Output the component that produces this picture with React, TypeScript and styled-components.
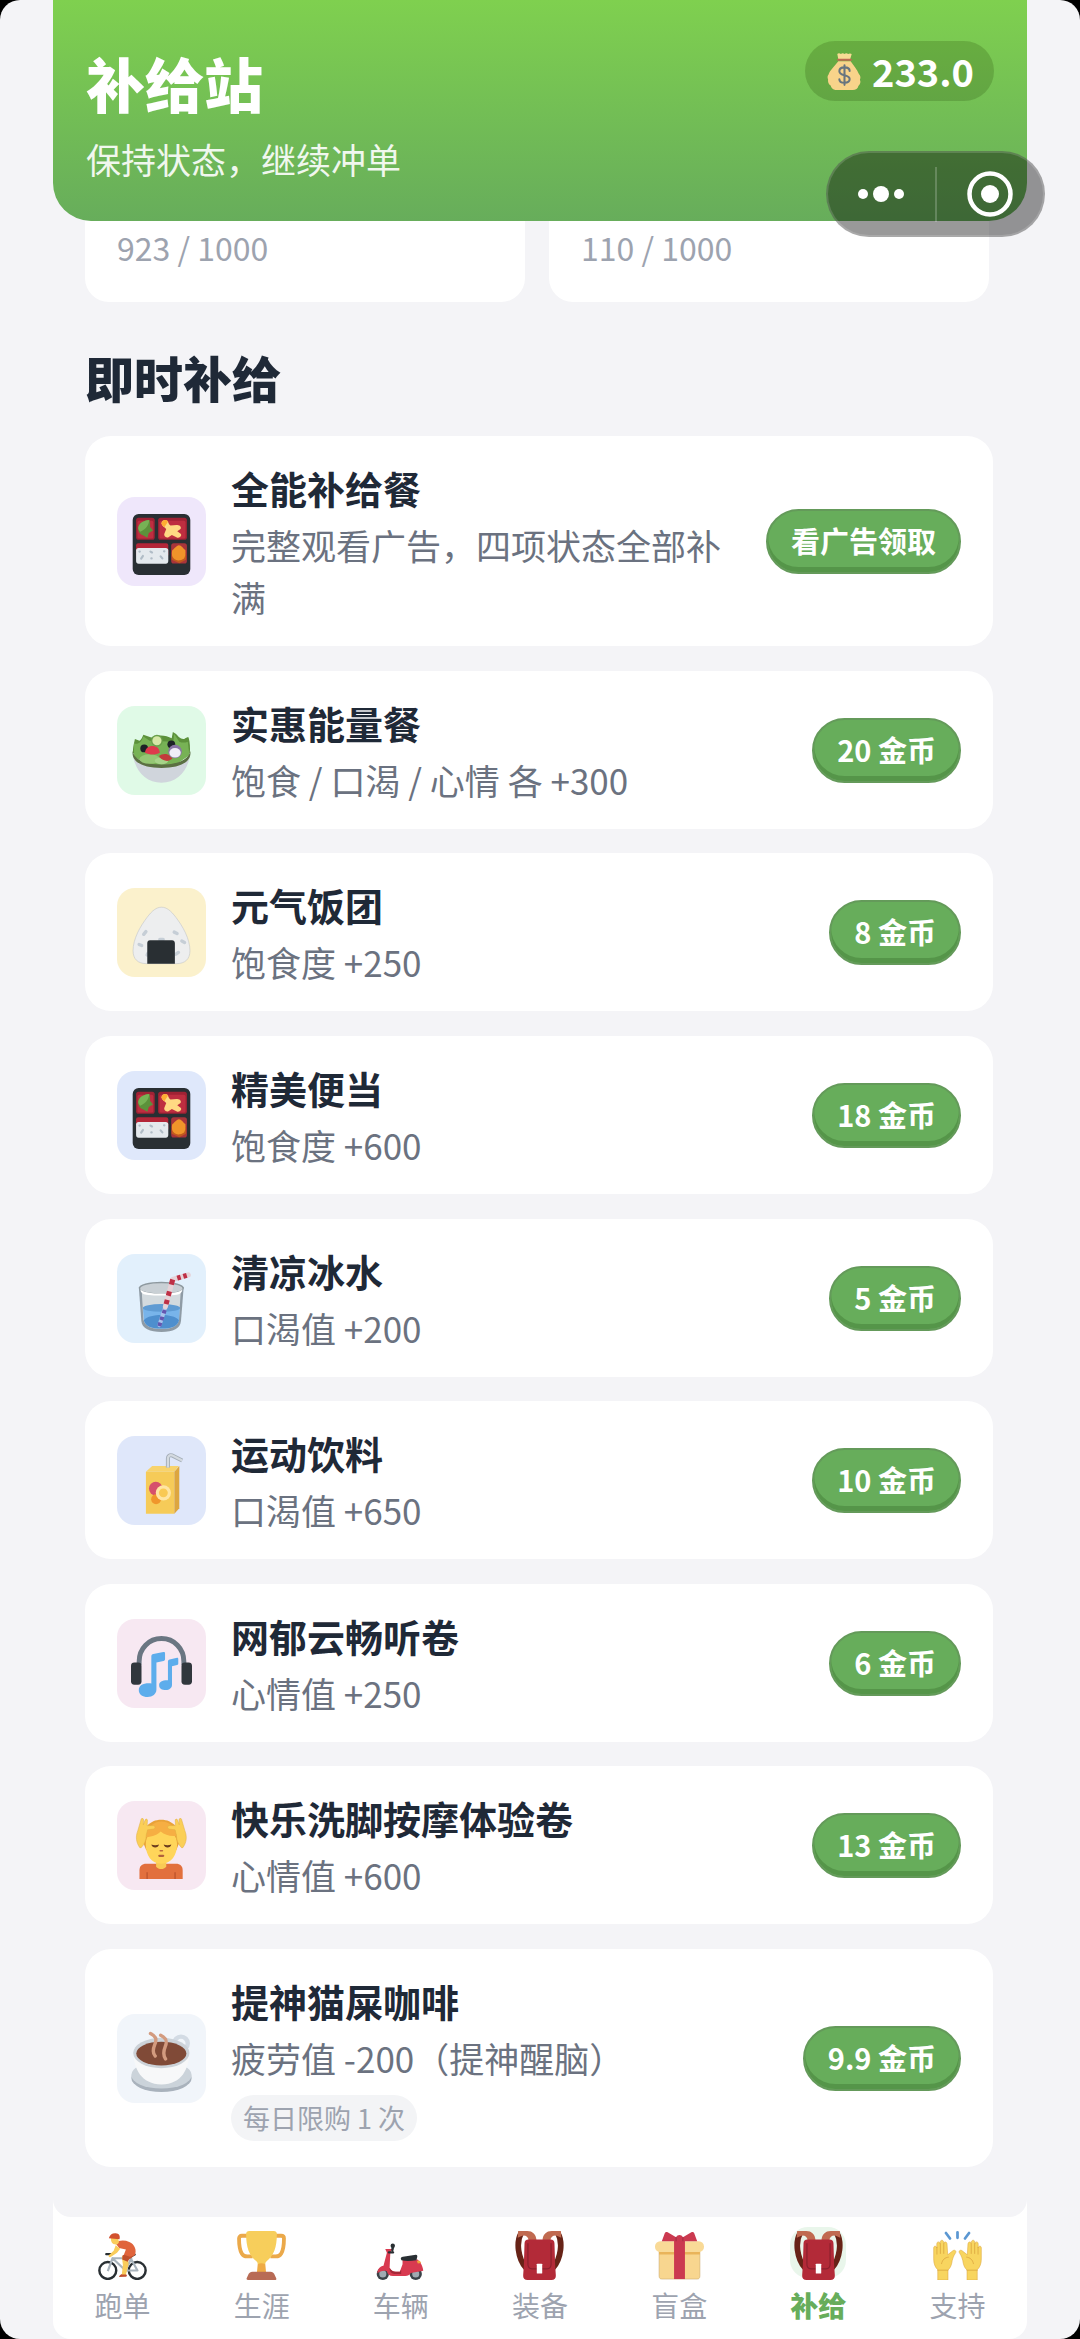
import React from 'react';

import styled, { createGlobalStyle } from 'styled-components';

const GlobalStyle = createGlobalStyle`
	* {
		box-sizing: border-box;
	}

	body {
		margin: 0;
		background: #000000;
		font-family: 'Noto Sans CJK SC', 'Noto Sans', sans-serif;
	}
`;

const Page = styled.div`
	position: relative;
	display: flex;
	min-height: 100vh;
	padding: 0 53px;
	background: #f4f4f7;
	border-radius: 20px;
	overflow: hidden;
`;

const Panel = styled.div`
	flex: 1;
	min-width: 0;
	display: flex;
	flex-direction: column;
	background: #ffffff;
	border-radius: 0 0 18px 18px;
`;

const Screen = styled.div`
	flex: 1;
	display: flex;
	flex-direction: column;
	background: #f4f4f7;
	border-radius: 0 0 18px 18px;
`;

const Header = styled.header`
	display: flex;
	justify-content: space-between;
	align-items: flex-start;
	padding: 41px 33px 37px;
	background: linear-gradient(#7fd04f, #67ad5b);
	border-radius: 0 0 38px 38px;
	color: #ffffff;
`;

const Title = styled.h1`
	margin: 0 0 9px;
	font-size: 59px;
	font-weight: 900;
	line-height: 84px;
`;

const Subtitle = styled.p`
	margin: 0;
	font-size: 35px;
	line-height: 50px;
	opacity: 0.9;
`;

const CoinPill = styled.div`
	display: flex;
	align-items: center;
	gap: 9px;
	height: 60px;
	padding: 0 20px 0 21px;
	border-radius: 30px;
	background: rgba(30, 60, 0, 0.2);
	font-size: 38px;
	font-weight: 700;
	line-height: 60px;
`;

const Capsule = styled.div`
	position: absolute;
	top: 151px;
	right: 35px;
	display: flex;
	align-items: center;
	width: 219px;
	height: 86px;
	border: 2px solid rgba(255, 255, 255, 0.15);
	border-radius: 43px;
	background: rgba(0, 0, 0, 0.4);
`;

const CapsuleButton = styled.button`
	flex: 1;
	display: flex;
	align-items: center;
	justify-content: center;
	height: 100%;
	padding: 0;
	border: 0;
	background: none;
`;

const CapsuleDivider = styled.span`
	width: 2px;
	height: 55px;
	background: rgba(255, 255, 255, 0.2);
`;

const Main = styled.main`
	flex: 1;
	display: flex;
	flex-direction: column;
	padding: 0 34px 50px 32px;
`;

const StatRow = styled.div`
	display: flex;
	gap: 24px;
`;

const StatCard = styled.div`
	flex: 0 0 calc(50% - 14px);
	padding: 0 32px 29px;
	border-radius: 0 0 24px 24px;
	background: #ffffff;
	color: #9da3af;
	font-size: 32px;
	line-height: 52px;
`;

const SectionTitle = styled.h2`
	margin: 40px 0 24px;
	color: #1f2937;
	font-size: 49px;
	font-weight: 900;
	line-height: 70px;
`;

const List = styled.ul`
	flex: 1;
	display: flex;
	flex-direction: column;
	justify-content: space-between;
	margin: 0;
	padding: 0;
	list-style: none;
`;

const Card = styled.li`
	display: flex;
	align-items: center;
	gap: 25px;
	padding: 24px 32px 23px;
	border-radius: 26px;
	background: #ffffff;
`;

const IconTile = styled.div<{ $tint: string }>`
	flex: none;
	display: flex;
	justify-content: center;
	width: 89px;
	height: 89px;
	padding-top: 17px;
	border-radius: 18px;
	background: ${(props) => props.$tint};
`;

const CardBody = styled.div`
	flex: 1;
	min-width: 0;
`;

const CardTitle = styled.h3`
	margin: 0 0 3px;
	color: #1f2937;
	font-size: 38px;
	font-weight: 700;
	line-height: 56px;
`;

const CardText = styled.p`
	margin: 0;
	color: #6b7280;
	font-size: 35px;
	line-height: 52px;
`;

const Limit = styled.span`
	display: block;
	width: fit-content;
	margin: 11px 0 3px;
	padding: 0 12px;
	border-radius: 23px;
	background: #f3f4f6;
	color: #9da3af;
	font-size: 27px;
	line-height: 46px;
`;

const BuyButton = styled.button`
	flex: none;
	height: 65px;
	padding: 0 23px 3px;
	border: 2px solid #649a5a;
	border-radius: 33px;
	background: #67ad5b;
	box-shadow: inset 0 -5px 0 #559549;
	color: #ffffff;
	font-family: inherit;
	font-size: 29px;
	font-weight: 700;
	line-height: 50px;
	white-space: nowrap;
`;

const Nav = styled.nav`
	display: grid;
	grid-template-columns: repeat(7, 1fr);
	padding: 10px 0 14px;
`;

const NavLink = styled.a<{ $active?: boolean }>`
	display: flex;
	flex-direction: column;
	align-items: center;
	gap: 7px;
	color: ${(props) => (props.$active ? '#67ad5b' : '#9da3af')};
	font-size: 28px;
	font-weight: ${(props) => (props.$active ? 900 : 400)};
	line-height: 40px;
	text-decoration: none;
`;

const NavIcon = styled.span<{ $active?: boolean }>`
	display: flex;
	justify-content: center;
	width: 56px;
	height: 51px;
	padding-top: 4px;
	border-radius: 18px;
	background: ${(props) => (props.$active ? '#e9f6eb' : 'transparent')};
`;

const Svg = styled.svg<{ $size: number }>`
	flex: none;
	display: block;
	width: ${(props) => props.$size}px;
	height: ${(props) => props.$size}px;
`;

const MoneyBag = () => (
	<Svg $size={37} viewBox="0 0 36 36" aria-hidden="true">
		<path
			fill="#f8d38a"
			d="M12 8C9 12 3.500 17 2.500 21c-1 1-1.300 3-.5 4.500-.3 3 .5 5 2.500 6C5.500 35 8 36 11 36h15c3 0 5-1.500 5.500-4 2-1.500 2.500-4 1.500-6 1-2 .5-4-1-5.500C30.500 16 26.500 12 24 8z"
		/>
		<path fill="#f8dc94" d="M11 1c1-1 2.500-.8 3.500 0 1-1 2.500-1 3.500 0 1-1 2.500-1 3.500 0 1-.8 2.700-.8 3.500 0l-1.500 5H12z" />
		<path fill="#bf6952" d="M11.500 5.500h13c.9 0 .9 2 0 2h-13c-.9 0-.9-2 0-2z" />
		<path
			fill="none"
			stroke="#67757f"
			strokeWidth="2"
			strokeLinecap="round"
			d="M23 17.500c0-2.300-2-3.500-5-3.500s-5 1.200-5 3.700c0 5 10 3 10 7.600 0 2.500-2 3.700-5 3.700s-5-1.200-5-3.500M18 12v19"
		/>
	</Svg>
);

const Bento = () => (
	<Svg $size={61} viewBox="0 0 36 36" aria-hidden="true">
		<rect x="1" width="34" height="36" rx="3.500" fill="#292f33" />
		<rect x="3" y="2.200" width="11" height="13" rx="1.500" fill="#a02234" />
		<rect x="3.800" y="4" width="9.400" height="10.500" rx="1" fill="#be2e40" />
		<rect x="16" y="2.200" width="17" height="13" rx="1.500" fill="#a02234" />
		<rect x="16.800" y="4" width="15.400" height="10.500" rx="1" fill="#be2e40" />
		<path fill="#5c913b" d="M4.300 8c.5-3 3-4 6.500-4.500.5 1.500.6 2.500.4 4l1.800 2.200-2.500 1.500-.8 2.800-2.700-1.500C5 12 4 10 4.300 8z" />
		<path fill="#77b255" d="M4.300 8c.5-3 3-4 6.500-4.500-.4 3-1.500 5-5.300 7C4.600 9.700 4.200 9 4.300 8z" />
		<path
			fill="#ffd983"
			d="M18 5.500c.3-2 2.800-2.600 3.800-1 .6 1 .6 1.700 1.500 2.300l3.700-.3c2-.2 3.300 1.800 1.800 2.700l-1.500 1 2 1.500c1 1-.5 2.800-2.200 2.200l-3-1.500-2 1.300c-1.700.6-3-1-2.300-2.300l1-2.500c-.8-1-2.500-1.500-2.800-3.400z"
		/>
		<path fill="#ffac33" d="M18 5.500c.3-2 2.800-2.600 3.800-1l-2 3.200c-1-.4-1.700-1-1.800-2.200z" />
		<rect x="3" y="17.200" width="19" height="8" rx="1.200" fill="#b32638" />
		<rect x="3" y="20" width="19" height="9.300" rx="1.500" fill="#e4e9ed" />
		<path
			stroke="#b0bcc6"
			strokeWidth="1.300"
			strokeLinecap="round"
			d="M6 26.300l1-1.500M11.500 22.200l.9.500M17.500 25l1 1.200M12 26.200h.2M19.500 22h.2M5 22.200h.2"
		/>
		<rect x="23.700" y="17.200" width="9.300" height="12" rx="1.500" fill="#a9343a" />
		<path fill="#c1591f" d="M24 24l4.500-3.500 4 3.500v3l-4 2-4.500-2z" />
		<path fill="#f0942a" d="M24.300 21.500c1-.5 2.500-3 4-3s2.500 2 3.800 2.800c.3 2.200-.2 4.200-.8 4.900-1 .6-2.500 1.300-3.500 1.200-1.500-.3-2.800-1-3.300-2.200-.5-1-.5-2.500-.2-3.700z" />
	</Svg>
);

const Salad = () => (
	<Svg $size={61} viewBox="0 0 36 36" aria-hidden="true">
		<path
			fill="#5c913b"
			d="M1.200 18C1 14 2 11.500 2.300 9.500l2.700 1c.8-.2 1.800-2.200 2.300-3.500L12 8.500C17 6.500 21 7.500 24 9l.7-3.700c1.300.7 2.600 1.600 3.500 3 1.300.9 2.200 1.400 3.500 1 .9-.6 1.600-1 2.300-.8.8 3 1 6 .7 9.500z"
		/>
		<path
			fill="#77b255"
			d="M1.800 12c2.200 1 4.200-.5 5.500-4l3.700 2.500 14 .5.500-4.500 3 4.500c1.700.8 3.700.6 5 0L34.500 19l-8 5.500-15 .5L1.800 20z"
		/>
		<path fill="#d0d5dc" d="M1 17.500C2 28 8.500 35.200 18 35.200S34 28 35 17.500c-2 5-9 8-17 8s-15-3-17-8z" />
		<path fill="#5b7042" d="M1 16.500c1 5.500 8 8 17 8s16-2.500 17-8c1 6.500-6 10-17 10S0 23 1 16.500z" />
		<ellipse cx="11" cy="21.300" rx="6" ry="2.800" fill="#95c774" />
		<ellipse cx="18" cy="22.300" rx="4" ry="2" fill="#a6d388" />
		<circle cx="7.800" cy="15" r="2.300" fill="#1d2226" />
		<circle cx="23.800" cy="12.600" r="2.300" fill="#1d2226" />
		<path fill="#dd3a4c" d="M8.300 17.500c0-2.500 2-4 4.500-4s4 1.600 4.200 4c-2.500 1.400-6 1.400-8.700 0z" />
		<path fill="#c23b3b" d="M16.500 19.500c1.500-1.400 4.500-1.600 6-.5l2 2c-1.600 1.400-3 1.600-4.500 1.200-1.700-.5-3-1.500-3.500-2.700z" />
		<circle cx="26" cy="16.800" r="4" fill="#8a76a5" />
		<ellipse cx="26" cy="17.600" rx="3.400" ry="2.800" fill="#f1eef8" />
		<circle cx="15.300" cy="10.500" r="3.500" fill="#6a9f4b" />
		<circle cx="15.300" cy="10.500" r="2.700" fill="#d5e8a6" />
	</Svg>
);

const RiceBall = () => (
	<Svg $size={61} viewBox="0 0 36 36" aria-hidden="true">
		<path
			fill="#edeeef"
			stroke="#b9bec3"
			strokeWidth="0.300"
			d="M18 1.300c-3 0-5.500 2-8.500 6C5.500 12.500 1.200 20 1.200 27c0 5 3 7.600 7.800 7.600h18c4.800 0 7.800-2.600 7.800-7.600 0-7-4.300-14.500-8.300-19.700-3-4-5.500-6-8.500-6z"
		/>
		<path
			stroke="#c6ced6"
			strokeWidth="2"
			strokeLinecap="round"
			d="M7.500 17.300l1.300-1.600M4.800 23.300l1.500.6M25.500 16l1.700.8M30 21.300l1.600.8M26.500 29l1.500-1M17 20.300h2M9.500 29.500l.5-1"
		/>
		<path fill="#292f33" d="M11.200 20.800h13c1 0 1.700.7 1.700 1.700v12.200H9.600V22.500c0-1 .6-1.700 1.600-1.700z" />
	</Svg>
);

const Cup = () => (
	<Svg $size={61} viewBox="0 0 36 36" aria-hidden="true">
		<path fill="#8f9ba5" d="M4.600 9.500l1.500 20C6.500 34 11 36 18 36s11-2 11.500-6.500l1.600-20z" />
		<path fill="#d3dade" d="M6.300 11l1 17.500C8 32.500 12 34.300 18 34.300s9.700-1.800 10.300-5.800L29.400 11z" />
		<path fill="#78b4ea" d="M7 21.500l.6 7.500c.8 3.500 4.400 5 10.400 5s9.500-1.500 10.300-5l.6-7.500z" />
		<path fill="#4e8fce" d="M7.600 29c2-2.200 6-3 10.400-3s8.300.8 10.300 3c-.8 3.500-4.300 5-10.300 5s-9.600-1.500-10.400-5z" />
		<ellipse cx="18" cy="21.800" rx="11" ry="2.300" fill="#5f9bd3" />
		<path stroke="#a9c3ec" strokeWidth="2.400" strokeLinecap="round" d="M20 22l-3.200 10" />
		<path stroke="#6456b0" strokeWidth="2.400" d="M19.900 23l-.6 2M18.500 27l-.6 2M17.300 30.500l-.6 2" />
		<ellipse cx="17.900" cy="10" rx="13.300" ry="3.700" fill="#8e999f" />
		<ellipse cx="17.900" cy="10.300" rx="12.400" ry="3" fill="#c9d0d5" />
		<path fill="#ffffff" d="M5.500 10.700c2 3.500 22.800 3.500 24.900 0-.3 2-1.400 3-3.400 3.300-6 .7-12 .7-18 0-2.200-.4-3.300-1.300-3.500-3.300z" />
		<path
			fill="none"
			stroke="#e6d3d8"
			strokeWidth="3"
			strokeLinecap="round"
			strokeLinejoin="round"
			d="M33.800 2.300L24.600 5l-4.300 16"
		/>
		<path
			stroke="#be3046"
			strokeWidth="3"
			d="M32.900 2.600l-2 .6M29.300 3.600l-2 .6M24.600 5l-.8 3M22.700 12l-.7 2.600M21.400 17l-.7 2.600"
		/>
	</Svg>
);

const JuiceBox = () => (
	<Svg $size={61} viewBox="0 0 36 36" aria-hidden="true">
		<path fill="#f8d36c" d="M8.800 11l3.700-3.400h15.700L25.500 11z" />
		<path fill="#f6cb58" d="M8.800 11h16.800v24.800H8.800z" />
		<path fill="#dda63f" d="M25.600 11l2.900-3.400v25l-2.900 3.200z" />
		<path fill="none" stroke="#a5aeb8" strokeWidth="2.400" d="M21.800 8.500V3.300c0-1.500 1-2.300 2.400-1.900l6 3" />
		<path fill="none" stroke="#d4dae0" strokeWidth="1.300" d="M21.800 8.500V3.300c0-1.500 1-2.300 2.400-1.900l6 3" />
		<circle cx="14.600" cy="21" r="4" fill="#d6506c" />
		<circle cx="14.800" cy="27.300" r="2.900" fill="#f0962b" />
		<circle cx="19.100" cy="23.500" r="4.500" fill="#ffe5a3" />
		<circle cx="19.100" cy="23.500" r="2.600" fill="#f9c954" />
	</Svg>
);

const Headphones = () => (
	<Svg $size={61} viewBox="0 0 36 36" aria-hidden="true">
		<path fill="none" stroke="#6a7682" strokeWidth="2.900" d="M4.800 17v-2C4.800 7.500 10.500 1.500 18 1.500S31.200 7.500 31.200 15v2" />
		<rect y="15.700" width="6.200" height="13" rx="2" fill="#31373d" />
		<rect x="29.800" y="15.700" width="6.200" height="13" rx="2" fill="#31373d" />
		<path
			fill="#5dadec"
			d="M12 12c0-.8.400-1.200 1.200-1.400l5.900-1.100c.6-.1 1 .2 1 .8v3.300c0 .6-.3 1-.9 1.100l-4.200.9v16c0 2.700-2.300 4.400-5.200 4.400-3 0-5.200-1.500-5.200-4 0-2.800 2.700-4.400 7.400-4z"
		/>
		<path
			fill="#5dadec"
			d="M21.800 15c0-.6.400-1 1-1.200l4.400-1c.5 0 .7.200.7.700v2.700c0 .5-.2.800-.7.900l-3 .7v11c0 1.900-1.500 3.100-3.700 3.100s-3.900-1-3.900-2.900c0-2 1.900-3 5.200-2.900z"
		/>
	</Svg>
);

const Massage = () => (
	<Svg $size={61} viewBox="0 0 36 36" aria-hidden="true">
		<path fill="#e2703d" d="M5 36v-5c0-2.700 1.500-4 4-4h17.500c2.600 0 4 1.400 4 4v5z" />
		<path stroke="#b9502a" strokeWidth="0.700" d="M9.500 36v-4M26 36v-4" />
		<path fill="#f9ca55" d="M14.800 24h6v4.800c-1.600 1.800-4.400 1.800-6 0z" />
		<path fill="#e9a238" d="M7 14C6.500 6 11 1 17.800 1S29.300 6 28.700 14l-2 5H9z" />
		<path fill="#ffd55a" d="M8.700 15.500c0-5 3.300-9 9.200-9s9.300 4 9.300 9c0 6.500-3.500 11.500-9.300 11.500s-9.200-5-9.200-11.500z" />
		<path fill="#f6ae43" d="M8.500 11.500c.5-6 5-9.500 9.500-9.500s8.500 3.500 9 8.500c-3.800.4-7-.3-9.500-2.500-1.500 1.800-4.500 3-9 3.500z" />
		<path
			fill="#fbcf57"
			stroke="#e0ad42"
			strokeWidth="0.300"
			d="M5.200 17.500C3 14.500 2.600 11 4 7.500l2-6.800c.3-.9 1.400-.6 1.400.4L7.300 4l1-2.800c.4-1 1.600-.6 1.400.5L9.500 4.500h4c1 .4.9 1.700-.2 2l-3.500.5L9 10c0 3-1 5.500-3 7.500z"
		/>
		<path
			fill="#fbcf57"
			stroke="#e0ad42"
			strokeWidth="0.300"
			d="M30.600 17.500c2.200-3 2.600-6.500 1.200-10l-2-6.800c-.3-.9-1.400-.6-1.400.4l.1 2.900-1-2.800c-.4-1-1.600-.6-1.400.5l.2 2.800h-4c-1 .4-.9 1.700.2 2L26 7l.8 3c0 3 1 5.500 3 7.500z"
		/>
		<path fill="#6b3c1e" d="M12 15.700c1.200.6 3.200.6 4.500 0-.3 2.300-4.100 2.300-4.500 0zM19.300 15.700c1.200.6 3.200.6 4.500 0-.3 2.300-4.100 2.300-4.500 0z" />
		<path fill="none" stroke="#bb6c3d" strokeWidth="0.800" strokeLinecap="round" d="M17.200 19.300h1.400" />
		<path fill="none" stroke="#b0623c" strokeWidth="1.300" strokeLinecap="round" d="M16.700 22.300h2.300" />
	</Svg>
);

const Coffee = () => (
	<Svg $size={61} viewBox="0 0 36 36" aria-hidden="true">
		<ellipse cx="18" cy="27.700" rx="17.800" ry="8.300" fill="#a9b2bc" />
		<ellipse cx="18" cy="26" rx="17.800" ry="8" fill="#cbd3da" />
		<circle cx="29.500" cy="7.300" r="4" fill="none" stroke="#d3dbe4" strokeWidth="2.600" />
		<path fill="#f7f8f9" d="M1.500 13c0 9 4.500 18.500 16.500 18.500S34.300 22 34.300 13z" />
		<ellipse cx="17.900" cy="13" rx="16.600" ry="9" fill="#ccd2d8" />
		<ellipse cx="17.900" cy="13.300" rx="14.800" ry="7" fill="#804a37" />
		<path
			fill="none"
			stroke="#d39b7f"
			strokeWidth="2"
			strokeLinecap="round"
			d="M11.500 1.500c3 1.500 4 3 2.500 6.500-1 2.500-1.400 5 .3 6.800M17.500 2.500c3 1.500 4.200 3.200 2.700 6.700-1 2.500-1.400 5 .2 7.300"
		/>
	</Svg>
);

const Cyclist = () => (
	<Svg $size={49} viewBox="0 0 36 36" aria-hidden="true">
		<g fill="none" stroke="#292f33" strokeWidth="1.800">
			<circle cx="7.200" cy="29" r="6.200" />
			<circle cx="28.800" cy="29" r="6.200" />
		</g>
		<path fill="none" stroke="#a9b4bd" strokeWidth="1.600" strokeLinejoin="round" d="M7.200 29.500l3.500-9.500 9.500 9h8.800L24 20H11M20.200 29l4.500-9.500" />
		<path stroke="#292f33" strokeWidth="1.500" strokeLinecap="round" d="M6 17h4M24 18.800l3-1.500" />
		<path fill="#c1502f" d="M15.500 33.800c0-1.200 1-1.700 2.200-2.300l2-.8 1.500 1.800c.2.700-.4 1-1 1.200z" />
		<path fill="#f9cc5b" d="M17.500 18.500h4.300l.7 6-2 7.500h-3l.8-7z" />
		<path fill="#c0502d" d="M18 18l8.500-4.500c1.200 3-.5 6-3.500 7l-1.200 2-4-1.500z" />
		<path fill="#e0643c" d="M12.500 8.500c3-1.800 7-2 10.500-.5 4 1.700 5.700 6 4 10l-3.500 1-4.500-1.500 1.500-4-5-1z" />
		<path fill="#f9cc5b" d="M13 10.500l3.300 2.500-2.300 3-5 3.200c-1 .3-1.600-.8-.9-1.600l3.400-3z" />
		<path fill="#f9cc5b" d="M9.500 5h5l1 3c-.5 1.500-2 2.200-3.500 1.800-1.600-.3-2.700-2.300-2.500-4.800z" />
		<path fill="#d2512e" d="M8 5.300C8.500 2.800 10.500 1.400 13 1.600s3.500 1.800 2.800 4.500z" />
	</Svg>
);

const Trophy = () => (
	<Svg $size={49} viewBox="0 0 36 36" aria-hidden="true">
		<path
			fill="none"
			stroke="#eba94a"
			strokeWidth="2.800"
			d="M8 3.500H3.500c-1.200 0-2 .8-2 2 0 5 .5 8.500 2 11 .8 1.400 2.200 2.200 4 2.200h4M28 3.500h4.500c1.200 0 2 .8 2 2 0 5-.5 8.500-2 11-.8 1.400-2.200 2.200-4 2.200h-4"
		/>
		<path
			fill="#f7ce5b"
			d="M9 0h18c1.400 0 2.300.8 2.300 2.200C29.300 12 27 18 22 22c-1 .8-1.200 1.500-1.200 2.500h-5.600c0-1-.2-1.700-1.200-2.500C9 18 6.700 12 6.700 2.200 6.700.8 7.600 0 9 0z"
		/>
		<path fill="#efab45" d="M15.200 24.500c1.500-1 4-1 5.600 0l.5 5.700h-6.600z" />
		<path fill="#b86b55" d="M11.500 30h13c1.800 0 2.700 1 3.300 2.500l1 2.200c.3.700 0 1.300-.8 1.300H8c-.8 0-1.200-.6-.9-1.300l1-2.200C8.700 31 9.700 30 11.500 30z" />
	</Svg>
);

const Scooter = () => (
	<Svg $size={49} viewBox="0 0 36 36" aria-hidden="true">
		<circle cx="5" cy="31.500" r="4.500" fill="#3a4248" />
		<circle cx="5" cy="31.500" r="2.600" fill="#a0aab2" />
		<circle cx="29.200" cy="31.500" r="4.500" fill="#3a4248" />
		<circle cx="29.200" cy="31.500" r="2.600" fill="#a0aab2" />
		<path
			fill="#d83a50"
			d="M6.800 13.200h5l-1.300 3.300L10 27c1 2 2.500 3 4.500 3h3l2-5.500V21h11c2 1.600 4 5 4.200 8.200l-9.200 1.600c-1 1.700-2 2.200-4 2.200h-9c-2.700 0-4-1.400-4.500-3.500-2.500-.7-5 0-7 1.500C1.200 27.500 3 26 5.500 25.500L8 16z"
		/>
		<path fill="#a52838" d="M10 27c1 2 2.500 3 4.500 3h3l1-1.500v3h-5c-2.600-.4-3.700-2-3.500-4.500z" />
		<path fill="#292f33" d="M18.300 20.600c-.4-1 .5-1.600 1.500-1.700l9.500-1.400c1 0 1.200.8 1 1.600l-.6 2.400c-4 .6-8 .8-11 0z" />
		<path fill="none" stroke="#292f33" strokeWidth="1.800" strokeLinecap="round" d="M9.500 15.700h3M12 14l.6-3.200" />
		<circle cx="12.300" cy="10.800" r="1.600" fill="#292f33" />
		<path fill="#f0a43a" d="M30 21.800h2.200l1 1.800-2.500.2z" />
	</Svg>
);

const Backpack = () => (
	<Svg $size={49} viewBox="0 0 36 36" aria-hidden="true">
		<path fill="none" stroke="#672317" strokeWidth="4.200" d="M4.500 1.500C.8 8 2 20 8 27M31.500 1.500C35.200 8 34 20 28 27" />
		<path fill="#c06a50" d="M2.300 0H9c4 0 6.500 2.500 6.800 6.800H10C9.800 4 7 2.600 4.500 3.800L2 5zM33.700 0H27c-4 0-6.500 2.500-6.800 6.800H26c.2-2.800 3-4.200 5.500-3L34 5z" />
		<path fill="#b32a38" d="M10 6.200h16c2 0 3 1 3 3l.5 16 .5 7.300c.2 2.300-1 3.500-3.300 3.500H9.300C7 36 5.800 34.800 6 32.500l.5-7.300L7 9.200c0-2 1-3 3-3z" />
		<path fill="none" stroke="#8b1f2d" strokeWidth="0.900" d="M9.500 9v15.500c0 2.200 1 3.300 3 3.300h11c2 0 3-1.100 3-3.300V9" />
		<rect x="16" y="24" width="4" height="7.300" rx="0.500" fill="#ffffff" />
	</Svg>
);

const Gift = () => (
	<Svg $size={49} viewBox="0 0 36 36" aria-hidden="true">
		<path fill="#f8d68f" stroke="#c9a66a" strokeWidth="0.400" d="M3 15h30v18c0 1.500-.7 2.300-2 2.300H5c-1.300 0-2-.8-2-2.300z" />
		<path fill="#e9b45a" d="M3 15h30v2.300H3z" />
		<rect y="7.500" width="36" height="8" rx="3.800" fill="#f9da97" />
		<path fill="#cb3a50" d="M14 6h8v29.300h-8z" />
		<path
			fill="#cb3a50"
			d="M15.500 4.500L9.300 1c-1-.6-1.800-.2-2.200.8L5 7.500h26l-2.100-5.700c-.4-1-1.200-1.400-2.200-.8l-6.200 3.500c-1-2-4-2-5 0z"
		/>
		<path fill="none" stroke="#a02c40" strokeWidth="0.700" d="M15.500 4.500v3M20.500 4.500v3" />
	</Svg>
);

const HandsUp = () => (
	<Svg $size={49} viewBox="0 0 36 36" aria-hidden="true">
		<path stroke="#5b97d2" strokeWidth="2" strokeLinecap="round" d="M9.500 1.500l3 4M18 1v4M26.500 1.500l-3 4" />
		<g fill="#f8d55f" stroke="#dba63f" strokeWidth="0.400">
			<path d="M3.500 28.500C1.500 26.500.5 24 .5 20.500v-8c0-1.800 2-1.800 2.300 0V9.500c0-2 2.200-2 2.500 0V8.300c0-2 2.400-2 2.600 0v1c.2-1.700 2.200-1.700 2.400.2l.5 8 3.800-3c1.300-1 2.800.2 2 1.500-1.600 2.500-2.500 5-2.800 7.500-.5 2.500-1.500 4-2.800 5.200V36H3.500z" />
			<path d="M32.500 28.500c2-2 3-4.500 3-8v-8c0-1.800-2-1.800-2.300 0V9.500c0-2-2.200-2-2.500 0V8.300c0-2-2.400-2-2.600 0v1c-.2-1.700-2.200-1.700-2.400.2l-.5 8-3.800-3c-1.300-1-2.800.2-2 1.500 1.600 2.500 2.500 5 2.800 7.500.5 2.500 1.500 4 2.800 5.200V36h7.500z" />
		</g>
		<path
			fill="none"
			stroke="#dba63f"
			strokeWidth="0.600"
			strokeLinecap="round"
			d="M2.900 12v5M5.400 9.500v7M7.900 9.500v7M33.100 12v5M30.600 9.500v7M28.100 9.500v7M3.500 28.800H11M25 28.800h7.500M6.300 24c.5-3 2.500-4.500 5-4.800M29.700 24c-.5-3-2.500-4.500-5-4.800"
		/>
	</Svg>
);

const supplies = [
	{ icon: <Bento />, tint: '#efe7fb', name: '全能补给餐', text: '完整观看广告，四项状态全部补满', action: '看广告领取' },
	{ icon: <Salad />, tint: '#e0fae7', name: '实惠能量餐', text: '饱食 / 口渴 / 心情 各 +300', action: '20 金币' },
	{ icon: <RiceBall />, tint: '#fbf1cc', name: '元气饭团', text: '饱食度 +250', action: '8 金币' },
	{ icon: <Bento />, tint: '#dfe8fb', name: '精美便当', text: '饱食度 +600', action: '18 金币' },
	{ icon: <Cup />, tint: '#e2f0fc', name: '清凉冰水', text: '口渴值 +200', action: '5 金币' },
	{ icon: <JuiceBox />, tint: '#dfe7fa', name: '运动饮料', text: '口渴值 +650', action: '10 金币' },
	{ icon: <Headphones />, tint: '#f7e8f2', name: '网郁云畅听卷', text: '心情值 +250', action: '6 金币' },
	{ icon: <Massage />, tint: '#f7e8f2', name: '快乐洗脚按摩体验卷', text: '心情值 +600', action: '13 金币' },
	{
		icon: <Coffee />,
		tint: '#f1f5fa',
		name: '提神猫屎咖啡',
		text: '疲劳值 -200（提神醒脑）',
		limit: '每日限购 1 次',
		action: '9.9 金币',
	},
];

const tabs = [
	{ icon: <Cyclist />, label: '跑单' },
	{ icon: <Trophy />, label: '生涯' },
	{ icon: <Scooter />, label: '车辆' },
	{ icon: <Backpack />, label: '装备' },
	{ icon: <Gift />, label: '盲盒' },
	{ icon: <Backpack />, label: '补给', active: true },
	{ icon: <HandsUp />, label: '支持' },
];

const App = () => {
	return (
		<>
			<GlobalStyle />
			<Page>
				<Panel>
					<Screen>
						<Header>
							<div>
								<Title>补给站</Title>
								<Subtitle>保持状态，继续冲单</Subtitle>
							</div>
							<CoinPill>
								<MoneyBag />
								<span>233.0</span>
							</CoinPill>
						</Header>
						<Main>
							<StatRow>
								<StatCard>923 / 1000</StatCard>
								<StatCard>110 / 1000</StatCard>
							</StatRow>
							<SectionTitle>即时补给</SectionTitle>
							<List>
								{supplies.map((item) => (
									<Card key={item.name}>
										<IconTile $tint={item.tint}>{item.icon}</IconTile>
										<CardBody>
											<CardTitle>{item.name}</CardTitle>
											<CardText>{item.text}</CardText>
											{item.limit && <Limit>{item.limit}</Limit>}
										</CardBody>
										<BuyButton type="button">{item.action}</BuyButton>
									</Card>
								))}
							</List>
						</Main>
					</Screen>
					<Nav>
						{tabs.map((tab) => (
							<NavLink key={tab.label} href="#" $active={tab.active}>
								<NavIcon $active={tab.active}>{tab.icon}</NavIcon>
								{tab.label}
							</NavLink>
						))}
					</Nav>
				</Panel>
				<Capsule>
					<CapsuleButton type="button" aria-label="更多">
						<Svg $size={48} viewBox="0 0 48 48" fill="#ffffff">
							<circle cx="6" cy="24" r="5" />
							<circle cx="24" cy="24" r="8" />
							<circle cx="42" cy="24" r="5" />
						</Svg>
					</CapsuleButton>
					<CapsuleDivider />
					<CapsuleButton type="button" aria-label="关闭">
						<Svg $size={48} viewBox="0 0 48 48">
							<circle cx="24" cy="24" r="20.500" fill="none" stroke="#ffffff" strokeWidth="4.500" />
							<circle cx="24" cy="24" r="9" fill="#ffffff" />
						</Svg>
					</CapsuleButton>
				</Capsule>
			</Page>
		</>
	);
};

export default App;
